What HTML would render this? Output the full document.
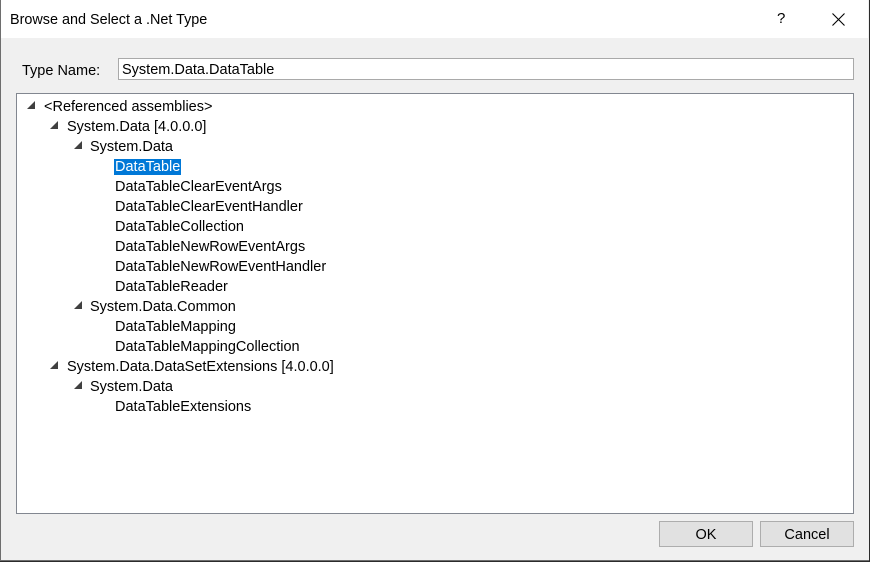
<!DOCTYPE html>
<html><head><meta charset="utf-8"><style>
*{margin:0;padding:0;box-sizing:border-box}
body{width:870px;height:562px;background:#2b2b2b;font-family:"Liberation Sans",sans-serif;font-size:14.5px;color:#000;position:relative;overflow:hidden}
.win{position:absolute;left:0;top:0;width:869px;height:561px;background:#f0f0f0;box-shadow:inset 1px -1px 0 #6e6e6e}
.title{position:absolute;left:1px;top:0;width:867px;height:38px;background:#fff}
.title .t{position:absolute;left:9px;top:12px;font-size:14.4px}
.a{position:absolute;white-space:nowrap;line-height:20px;margin-top:1px}
.input{position:absolute;left:118px;top:58px;width:736px;height:22px;background:#fff;border:1px solid #a9a9a9;padding-left:3px;padding-top:1px;line-height:20px}
.tree{position:absolute;left:16px;top:93px;width:838px;height:421px;background:#fff;border:1px solid #828790}
.tri{position:absolute;width:8px;height:8px;background:#404040;clip-path:polygon(100% 0,100% 100%,0 100%)}
.btn{position:absolute;top:521px;width:94px;height:26px;background:#e1e1e1;border:1px solid #adadad;text-align:center;line-height:24px;padding-top:1px}
.sel{background:#0078d7;color:#fff;padding:0 1px;margin-left:-1px}
</style></head><body>
<div class="win">
<div class="title"><span class="t">Browse and Select a .Net Type</span>
<span style="position:absolute;left:776px;top:10px;font-size:15px">?</span>
<svg style="position:absolute;left:831px;top:13px" width="13" height="13"><path d="M0.5 0.5L12.5 12.5M12.5 0.5L0.5 12.5" stroke="#000" stroke-width="1.1"/></svg>
</div>
<div class="a" style="left:22px;top:60px">Type Name:</div>
<div class="input">System.Data.DataTable</div>
<div class="tree"></div>
<div class="tri" style="left:27px;top:101px"></div><div class="a" style="left:44px;top:96px">&lt;Referenced assemblies&gt;</div>
<div class="tri" style="left:50px;top:121px"></div><div class="a" style="left:67px;top:116px">System.Data [4.0.0.0]</div>
<div class="tri" style="left:74px;top:141px"></div><div class="a" style="left:90px;top:136px">System.Data</div>
<div class="a" style="left:115px;top:156px"><span class="sel">DataTable</span></div>
<div class="a" style="left:115px;top:176px">DataTableClearEventArgs</div>
<div class="a" style="left:115px;top:196px">DataTableClearEventHandler</div>
<div class="a" style="left:115px;top:216px">DataTableCollection</div>
<div class="a" style="left:115px;top:236px">DataTableNewRowEventArgs</div>
<div class="a" style="left:115px;top:256px">DataTableNewRowEventHandler</div>
<div class="a" style="left:115px;top:276px">DataTableReader</div>
<div class="tri" style="left:74px;top:301px"></div><div class="a" style="left:90px;top:296px">System.Data.Common</div>
<div class="a" style="left:115px;top:316px">DataTableMapping</div>
<div class="a" style="left:115px;top:336px">DataTableMappingCollection</div>
<div class="tri" style="left:50px;top:361px"></div><div class="a" style="left:67px;top:356px">System.Data.DataSetExtensions [4.0.0.0]</div>
<div class="tri" style="left:74px;top:381px"></div><div class="a" style="left:90px;top:376px">System.Data</div>
<div class="a" style="left:115px;top:396px">DataTableExtensions</div>
<div class="btn" style="left:659px">OK</div>
<div class="btn" style="left:760px">Cancel</div>
</div>
</body></html>
